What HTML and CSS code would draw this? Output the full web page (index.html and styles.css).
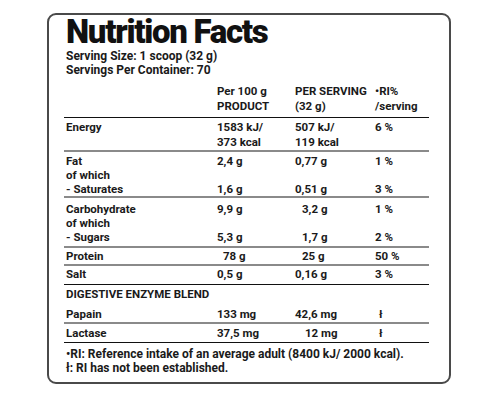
FILE: index.html
```html
<!DOCTYPE html>
<html lang="en">
<head>
    <meta charset="UTF-8">
    <title>Nutrition Facts</title>
    <link rel="stylesheet" href="styles.css">
</head>
<body>
    <div class="label">
        <h1 class="title">Nutrition Facts</h1>
        <p class="serving">Serving Size: 1 scoop (32 g)<br>Servings Per Container: 70</p>

        <table class="facts">
            <colgroup>
                <col class="c-name">
                <col class="c-100">
                <col class="c-serv">
                <col class="c-ri">
            </colgroup>
            <thead>
                <tr>
                    <th></th>
                    <th>Per 100 g<br>PRODUCT</th>
                    <th>PER SERVING<br>(32 g)</th>
                    <th>•RI%<br>/serving</th>
                </tr>
            </thead>
            <tbody>
                <tr class="energy sep">
                    <td>Energy</td>
                    <td>1583 kJ/<br>373 kcal</td>
                    <td>507 kJ/<br>119 kcal</td>
                    <td>6 %</td>
                </tr>
                <tr class="group">
                    <td>Fat<br>of which<br>- Saturates</td>
                    <td>2,4 g<br><br>1,6 g</td>
                    <td>0,77 g<br><br>0,51 g</td>
                    <td class="ri">1 %<br><br>3 %</td>
                </tr>
                <tr class="group carb sep">
                    <td>Carbohydrate<br>of which<br>- Sugars</td>
                    <td>9,9 g<br><br>5,3 g</td>
                    <td class="pad">3,2 g<br><br>1,7 g</td>
                    <td class="ri">1 %<br><br>2 %</td>
                </tr>
                <tr class="protein sep">
                    <td>Protein</td>
                    <td class="pad-sm">78 g</td>
                    <td class="pad">25 g</td>
                    <td class="ri">50 %</td>
                </tr>
                <tr class="salt dark">
                    <td>Salt</td>
                    <td>0,5 g</td>
                    <td>0,16 g</td>
                    <td class="ri">3 %</td>
                </tr>
                <tr class="blend">
                    <td colspan="4">DIGESTIVE ENZYME BLEND</td>
                </tr>
                <tr class="papain sep">
                    <td>Papain</td>
                    <td>133 mg</td>
                    <td>42,6 mg</td>
                    <td class="ri mark">ł</td>
                </tr>
                <tr class="lactase dark">
                    <td>Lactase</td>
                    <td>37,5 mg</td>
                    <td class="pad-lg">12 mg</td>
                    <td class="ri mark">ł</td>
                </tr>
            </tbody>
        </table>

        <p class="notes">•RI: Reference intake of an average adult (8400 kJ/ 2000 kcal).<br>ł: RI has not been established.</p>
    </div>
</body>
</html>
```

FILE: styles.css
```css
body {
    margin: 0;
    padding: 13px 0 0 47px;
    background: #fff;
    font-family: Roboto, "Liberation Sans", sans-serif;
    color: #1a1a1a;
}
.label {
    box-sizing: border-box;
    width: 404px;
    height: 371px;
    border: 2px solid #4a4a4a;
    border-radius: 9px;
    padding: 0 20px 0 15px;
}
.title {
    margin: 0;
    padding-left: 2px;
    font-size: 33px;
    font-weight: 900;
    line-height: 34px;
    letter-spacing: -1.3px;
    color: #111;
}
.serving {
    margin: 0;
    padding-left: 2px;
    font-size: 12px;
    font-weight: 700;
    line-height: 14px;
}
.facts {
    width: 365px;
    margin-top: 6.5px;
    table-layout: fixed;
    border-collapse: collapse;
    font-size: 11.5px;
    font-weight: 700;
    line-height: 14px;
}
.c-name { width: 153px; }
.c-100 { width: 78px; }
.c-serv { width: 80px; }
.c-ri { width: 54px; }
.facts th,
.facts td {
    padding: 0;
    text-align: left;
    vertical-align: top;
    font-weight: 700;
    white-space: nowrap;
}
.facts th:first-child,
.facts td:first-child {
    padding-left: 2px;
}
.facts thead th {
    line-height: 15px;
    padding-bottom: 3px;
    border-bottom: 1.5px solid #111;
}
.facts tr.sep td {
    border-bottom: 2px solid #8a8a8a;
}
.facts tr.dark td {
    border-bottom: 1.5px solid #111;
}
.facts tr.energy td {
    line-height: 15px;
    padding-top: 2px;
}
.facts tr.group td {
    padding-top: 2px;
}
.facts tr.group.carb td {
    padding-top: 4px;
    padding-bottom: 2px;
}
.facts tr.group:not(.carb) td {
    border-bottom: 2px solid #8a8a8a;
}
.facts tr.protein td {
    padding-top: 1px;
    padding-bottom: 1px;
}
.facts tr.salt td {
    padding-top: 1px;
    padding-bottom: 3px;
}
.facts tr.blend td {
    padding-top: 2.5px;
    padding-bottom: 3px;
}
.facts tr.papain td {
    padding-top: 3px;
    padding-bottom: 1px;
}
.facts tr.lactase td {
    padding-top: 2px;
    padding-bottom: 2px;
}
.facts td.mark {
    padding-left: 4px;
}
.facts td.pad {
    padding-left: 7px;
}
.facts td.pad-sm {
    padding-left: 6px;
}
.facts td.pad-lg {
    padding-left: 10px;
}
.notes {
    margin: 3.5px 0 0;
    padding-left: 2px;
    font-size: 12px;
    font-weight: 700;
    line-height: 14px;
}
```
